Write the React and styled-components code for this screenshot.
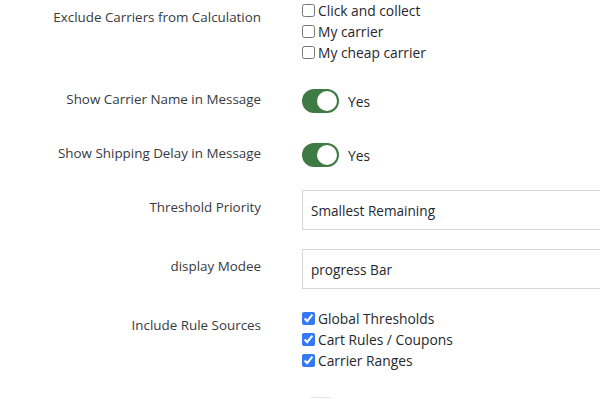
import React from "react";
import styled, { createGlobalStyle } from "styled-components";

const Global = createGlobalStyle`
  html, body { margin: 0; padding: 0; background: #fff; overflow: hidden; }
  body { font-family: "Open Sans", "Noto Sans", sans-serif; color: #363a41; }
  *, *::before, *::after { box-sizing: border-box; }
`;

const Panel = styled.div`
  width: 760px;
  height: 399px;
  overflow: hidden;
  border-top: 1px solid #dcdcdc;
  margin-top: -1px;
`;

const Row = styled.div`
  display: grid;
  grid-template-columns: 261px 1fr;
  column-gap: 41px;
  align-items: start;
  margin-bottom: ${(p) => p.$space}px;
`;

const Label = styled.div`
  text-align: right;
  font-size: 13.4px;
  line-height: 20px;
  color: #363a41;
  padding-top: ${(p) => p.$pad}px;
`;

const CheckList = styled.div`
  display: flex;
  flex-direction: column;
`;

const CheckLine = styled.label`
  display: flex;
  align-items: center;
  height: 21px;
  font-size: 13.8px;
  color: #25282c;
  gap: 3px;
`;

const Box = styled.input`
  width: 13px;
  height: 13px;
  margin: 0;
  accent-color: #3478f6;
`;

const SwitchWrap = styled.div`
  display: flex;
  align-items: center;
  gap: 9px;
  font-size: 13.8px;
  color: #25282c;
`;

const Track = styled.span`
  position: relative;
  width: 37px;
  height: 24px;
  border-radius: 12px;
  background: ${(p) => (p.$on ? "#3f7a45" : "#e3e3e3")};
  flex: none;
`;

const Knob = styled.span`
  position: absolute;
  top: 2px;
  left: ${(p) => (p.$on ? "15px" : "2px")};
  width: 20px;
  height: 20px;
  border-radius: 50%;
  background: #fff;
`;

const Field = styled.div`
  height: 40px;
  border: 1px solid #d6d6d6;
  display: flex;
  align-items: center;
  padding: 1px 8px 0;
  font-size: 13.6px;
  color: #25282c;
`;

function Switch({ on, text }) {
  return (
    <SwitchWrap>
      <Track $on={on}>
        <Knob $on={on} />
      </Track>
      {text}
    </SwitchWrap>
  );
}

function Checks({ items, checked }) {
  return (
    <CheckList>
      {items.map((t) => (
        <CheckLine key={t}>
          <Box type="checkbox" defaultChecked={checked} />
          {t}
        </CheckLine>
      ))}
    </CheckList>
  );
}

export default function App() {
  return (
    <>
      <Global />
      <Panel>
        <Row $space={26}>
          <Label $pad={7}>Exclude Carriers from Calculation</Label>
          <Checks items={["Click and collect", "My carrier", "My cheap carrier"]} checked={false} />
        </Row>
        <Row $space={30}>
          <Label $pad={0}>Show Carrier Name in Message</Label>
          <Switch on text="Yes" />
        </Row>
        <Row $space={23}>
          <Label $pad={0}>Show Shipping Delay in Message</Label>
          <Switch on text="Yes" />
        </Row>
        <Row $space={19}>
          <Label $pad={7}>Threshold Priority</Label>
          <Field>Smallest Remaining</Field>
        </Row>
        <Row $space={19}>
          <Label $pad={7}>display Modee</Label>
          <Field>progress Bar</Field>
        </Row>
        <Row $space={26}>
          <Label $pad={7}>Include Rule Sources</Label>
          <Checks items={["Global Thresholds", "Cart Rules / Coupons", "Carrier Ranges"]} checked />
        </Row>
        <Row $space={20}>
          <Label $pad={0} />
          <Switch on={false} />
        </Row>
      </Panel>
    </>
  );
}
